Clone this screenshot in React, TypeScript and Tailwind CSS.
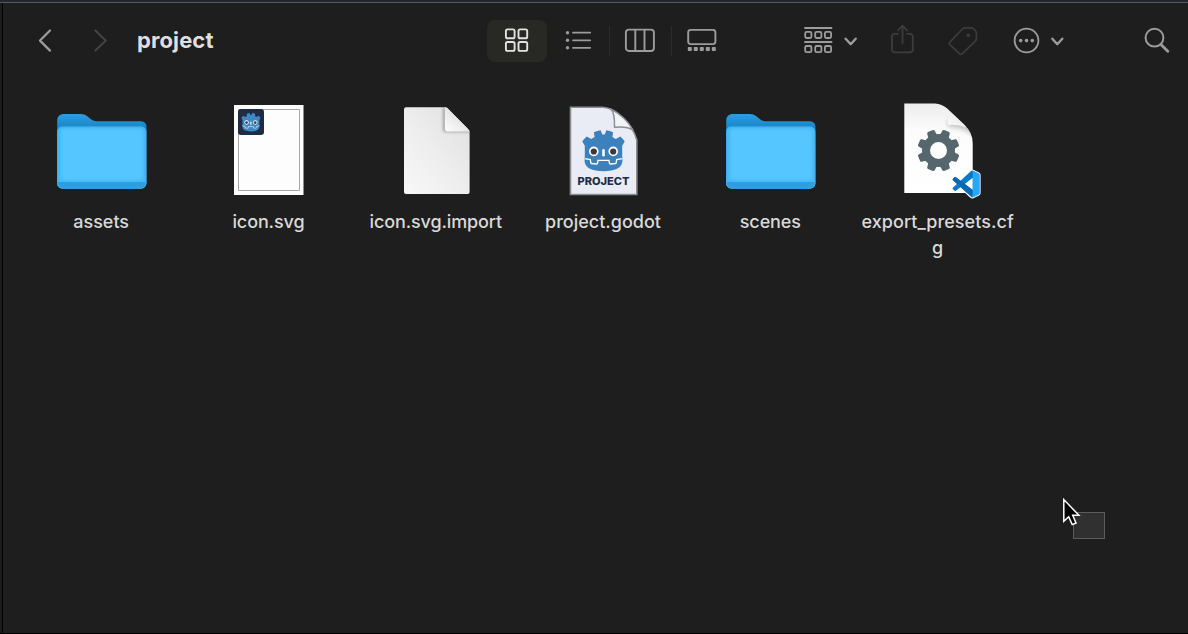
import type { ReactNode } from "react";

function ToolIcon({ box, className, children }: { box: string; className: string; children: ReactNode }) {
  return (
    <svg
      viewBox={box}
      className={`h-[42px] shrink-0 ${className}`}
      fill="none"
      stroke="currentColor"
      strokeWidth={2}
      strokeLinecap="round"
      strokeLinejoin="round"
    >
      {children}
    </svg>
  );
}

function Toolbar() {
  return (
    <header className="flex h-[75px] shrink-0 items-start pt-[17px] text-[#9c9c9c]">
      <ToolIcon box="0 0 20 42" className="ml-[32px] w-5">
        <path d="M15 10.5 5 20.6 15 30.6" strokeWidth={2.2} />
      </ToolIcon>
      <ToolIcon box="0 0 20 42" className="ml-[36px] w-5 text-[#464646]">
        <path d="M4.3 10.5 14.8 20.6 4.3 30.6" />
      </ToolIcon>
      <h1 className="ml-[26px] w-[350px] text-[22px] leading-[41px] font-bold tracking-[0.1px] text-[#dfdfdf]">
        project
      </h1>

      <div className="flex h-[42px] w-[60px] shrink-0 justify-center rounded-lg bg-[#282924] text-[#e2e2e2]">
        <ToolIcon box="0 0 60 42" className="w-[60px]">
          {[18.9, 31.5].map((x) =>
            [9.4, 22].map((y) => <rect key={`${x}-${y}`} x={x} y={y} width={8.7} height={8.9} rx={1.6} strokeWidth={1.9} />),
          )}
        </ToolIcon>
      </div>
      <ToolIcon box="0 0 30 42" className="ml-[17px] w-[30px]">
        {[12.7, 20.3, 27.8].map((y) => (
          <g key={y}>
            <circle cx={3.5} cy={y} r={1.7} fill="currentColor" stroke="none" />
            <path d={`M9 ${y}H26.2`} strokeWidth={1.8} />
          </g>
        ))}
      </ToolIcon>
      <div className="mt-[6px] ml-[15px] h-[30px] w-px shrink-0 bg-[#2b2b2b]" />
      <ToolIcon box="0 0 32 42" className="ml-[14px] w-8">
        <rect x={1.9} y={9.6} width={28} height={21.4} rx={3} strokeWidth={1.9} />
        <path d="M11.3 10v21M20.5 10v21" strokeWidth={1.9} />
      </ToolIcon>
      <div className="mt-[6px] ml-[15px] h-[30px] w-px shrink-0 bg-[#2b2b2b]" />
      <ToolIcon box="0 0 32 42" className="ml-[14px] w-8">
        <rect x={2.2} y={9.9} width={27.2} height={14.2} rx={2.5} strokeWidth={1.9} />
        {[1.8, 7.8, 13.8, 19.8, 25.8].map((x) => (
          <rect key={x} x={x} y={27} width={4} height={4} rx={0.7} fill="currentColor" stroke="none" />
        ))}
      </ToolIcon>

      <ToolIcon box="0 0 30 42" className="ml-[85px] w-[30px]">
        <path d="M2 8H28.5M2 22H28.5" strokeWidth={1.9} />
        {[2, 12, 21.7].map((x) =>
          [11.8, 26].map((y) => <rect key={`${x}-${y}`} x={x + 0.2} y={y} width={6.2} height={6.2} rx={1.4} strokeWidth={1.8} />),
        )}
      </ToolIcon>
      <ToolIcon box="0 0 16 42" className="ml-[10px] w-4">
        <path d="M2.6 18.7 7.7 24.2 12.7 18.7" strokeWidth={2.4} />
      </ToolIcon>
      <ToolIcon box="0 0 28 42" className="ml-[30px] w-7 text-[#3c3c3c]">
        <path d="M9 13.8H5.8a2.8 2.8 0 0 0-2.8 2.8V29.6a2.8 2.8 0 0 0 2.8 2.8H21a2.8 2.8 0 0 0 2.8-2.8V16.6A2.8 2.8 0 0 0 21 13.8H18M13.5 23V6M9 10.3 13.5 5.7 18 10.3" strokeWidth={1.8} />
      </ToolIcon>
      <ToolIcon box="0 0 32 42" className="ml-[30px] w-8 text-[#3c3c3c]">
        <path d="M3.1 21.8 15.3 9Q16.6 7.8 18.2 7.8H24Q26 7.8 27 9.1L28.6 11Q29.4 12 29.4 13.4V18.5Q29.4 20.2 28.2 21.3L15.5 33.4Q13.8 34.9 12.2 33.3L3.1 24.8Q1.6 23.3 3.1 21.8Z" strokeWidth={1.7} />
        <circle cx={21.3} cy={15.3} r={1.8} fill="currentColor" stroke="none" />
      </ToolIcon>
      <ToolIcon box="0 0 30 42" className="ml-[33px] w-[30px]">
        <circle cx={14.5} cy={20.5} r={11.9} strokeWidth={1.8} />
        {[8.7, 14.5, 20.3].map((x) => (
          <circle key={x} cx={x} cy={20.6} r={1.8} fill="currentColor" stroke="none" />
        ))}
      </ToolIcon>
      <ToolIcon box="0 0 16 42" className="ml-[8px] w-4">
        <path d="M2.3 18.7 7.3 24.2 12.3 18.7" strokeWidth={2.4} />
      </ToolIcon>
      <ToolIcon box="0 0 30 42" className="ml-[76px] w-[30px]">
        <circle cx={12.5} cy={17.7} r={8.9} strokeWidth={2} />
        <path d="m19.2 24.7 6.6 6.5" strokeWidth={2.8} />
      </ToolIcon>
    </header>
  );
}

function Art({ children }: { children: ReactNode }) {
  return (
    <svg viewBox="0 0 100 104" className="h-[104px] w-[100px]">
      {children}
    </svg>
  );
}

function FolderArt({ id }: { id: string }) {
  return (
    <Art>
      <defs>
        <linearGradient id={`${id}-back`} x1="0" y1="0" x2="0" y2="1">
          <stop offset="0" stopColor="#2f9ee0" />
          <stop offset="0.2" stopColor="#1583c6" />
          <stop offset="1" stopColor="#2497dc" />
        </linearGradient>
        <filter id={`${id}-soft`} x="-10%" y="-10%" width="120%" height="120%">
          <feGaussianBlur stdDeviation="1.6" />
        </filter>
        <clipPath id={`${id}-clip`}>
          <rect x="6.2" y="26.5" width="89" height="62" rx="5" />
        </clipPath>
      </defs>
      <path d="M6.200 20a6 6 0 0 1 6-6H30q3.500 0 6 2l4 3.200q2.500 2 5.500 2H90a5.500 5.500 0 0 1 5.500 5.500V83a5.500 5.500 0 0 1-5.500 5.500H11.700A5.500 5.500 0 0 1 6.200 83Z" fill={`url(#${id}-back)`} />
      <g clipPath={`url(#${id}-clip)`}>
        <rect x="6" y="26.5" width="90" height="62" fill="#46b8f5" />
        <rect x="10" y="29" width="82" height="51" rx="3" fill="#54c6ff" filter={`url(#${id}-soft)`} />
        <rect x="6" y="82" width="90" height="8" fill="#2d9fe0" />
      </g>
      <rect x="6.600" y="26.800" width="88.300" height="61.400" rx="5" fill="none" stroke="#3daeea" strokeWidth="0.8" />
    </Art>
  );
}

function GodotHead({ color }: { color: string }) {
  return (
    <g>
      <path
        d="M31.800 59V45.800L29.300 41.600Q31 38.800 33.800 36.600L38.200 39 41.600 37 40.900 32.200Q44 30.700 47.600 30.200L49.300 34.400H51.700L53.400 30.200Q57 30.700 60.100 32.200L59.400 37 62.800 39 67.200 36.600Q70 38.800 71.700 41.600L69.200 45.800V59Z"
        fill={color}
      />
      <path d="M31.600 57.500H69.400V61.500Q68.200 71.200 50.500 71.200 32.800 71.200 31.600 61.500Z" fill={color} />
      <path
        d="M31.600 58.700 37.300 59.500 37.900 63Q38.100 63.700 39 63.700L43.600 64Q44.500 64 44.600 63.100L45 60.300H56L56.400 63.100Q56.500 64 57.400 64L62 63.700Q62.900 63.700 63.100 63L63.700 59.500 69.400 58.700"
        fill="none"
        stroke="#fff"
        strokeWidth="1.300"
      />
      <path d="M50.500 50.200V55.200" stroke="#fff" strokeWidth="2.600" strokeLinecap="round" />
      {[40.800, 60.200].map((x) => (
        <g key={x}>
          <circle cx={x} cy="51.400" r="4.800" fill="#fff" />
          <circle cx={x} cy="51.500" r="3.100" fill="#383a3e" />
        </g>
      ))}
    </g>
  );
}

function SvgArt() {
  return (
    <Art>
      <path d="M16 5h69.500v90H16z" fill="#fdfdfd" />
      <path d="M20.500 9.500h61v81h-61z" fill="none" stroke="#a8a8a8" />
      <rect x="20" y="9" width="26" height="26" rx="3" fill="#202c44" />
      <g transform="translate(10.200 -.600) scale(.450)">
        <GodotHead color="#3f87c3" />
      </g>
    </Art>
  );
}

function PlainArt() {
  return (
    <Art>
      <defs>
        <linearGradient id="plain-page" x1="0" y1="1" x2="1" y2="0">
          <stop offset="0" stopColor="#f8f8f8" />
          <stop offset="0.45" stopColor="#eeeeef" />
          <stop offset="1" stopColor="#dedede" />
        </linearGradient>
        <linearGradient id="plain-fold" x1="0" y1="1" x2="0.7" y2="0.3">
          <stop offset="0" stopColor="#ffffff" />
          <stop offset="1" stopColor="#dcdcdc" />
        </linearGradient>
        <filter id="plain-shadow" x="-40%" y="-40%" width="180%" height="180%">
          <feGaussianBlur stdDeviation="1.8" />
        </filter>
        <clipPath id="plain-clip">
          <path d="M20 7.300H58.500q2 0 3.300 1.300L81.600 28.500q2 2 2 4V92a2 2 0 0 1-2 2H20a2 2 0 0 1-2-2V9.300a2 2 0 0 1 2-2Z" />
        </clipPath>
      </defs>
      <g clipPath="url(#plain-clip)">
        <path d="M18 7h68v88H18z" fill="url(#plain-page)" />
        <path d="M57 7v22q0 3 3 3h25V14Z" fill="#888" opacity="0.75" filter="url(#plain-shadow)" />
        <path d="M58.800 6v22.500q0 3 3 3H86V20Z" fill="url(#plain-fold)" />
      </g>
    </Art>
  );
}

function ProjectArt() {
  return (
    <Art>
      <path d="M17.500 7.200H49.500Q60.500 8 67.500 16Q80.500 27 83.800 40V94.500H17.500Z" fill="#e9ecf4" stroke="#8e8e8e" strokeWidth="1.600" />
      <path d="M57.500 8.800Q62 12 61.500 27.300Q74 26 80 30Q73 17 57.500 8.800Z" fill="#f3f4f8" stroke="#8e8e8e" strokeWidth="1.500" strokeLinejoin="round" />
      <GodotHead color="#3c81bb" />
      <text x="24.500" y="85.300" textLength="52" lengthAdjust="spacingAndGlyphs" fontFamily="Inter, sans-serif" fontWeight="800" fontSize="10.500" fill="#202b49">
        PROJECT
      </text>
    </Art>
  );
}

const vscodePath =
  "M23.15 2.587L18.21.21a1.494 1.494 0 0 0-1.705.29l-9.46 8.63-4.12-3.128a.999.999 0 0 0-1.276.057L.327 7.261A1 1 0 0 0 .326 8.74L3.899 12 .326 15.26a1 1 0 0 0 .001 1.479L1.65 17.94a.999.999 0 0 0 1.276.057l4.12-3.128 9.46 8.63a1.492 1.492 0 0 0 1.704.29l4.942-2.377A1.5 1.5 0 0 0 24 20.06V3.939a1.5 1.5 0 0 0-.85-1.352zm-5.146 14.861L10.826 12l7.178-5.448v10.896z";

function ConfigArt() {
  return (
    <Art>
      <defs>
        <linearGradient id="cfg-page" x1="0" y1="0" x2="0" y2="1">
          <stop offset="0" stopColor="#ececec" />
          <stop offset="0.3" stopColor="#fcfcfc" />
          <stop offset="1" stopColor="#ffffff" />
        </linearGradient>
        <linearGradient id="cfg-fold" x1="0" y1="1" x2="0.7" y2="0.3">
          <stop offset="0" stopColor="#ffffff" />
          <stop offset="1" stopColor="#e4e4e4" />
        </linearGradient>
        <filter id="cfg-shadow" x="-40%" y="-60%" width="180%" height="220%">
          <feGaussianBlur stdDeviation="2.4" />
        </filter>
        <clipPath id="cfg-clip">
          <path d="M16.300 3.500H47Q54 4 59 8.500L76 24.500Q84.700 32.500 84.700 43V93H16.300Z" />
        </clipPath>
      </defs>
      <g clipPath="url(#cfg-clip)">
        <path d="M16 3h70v91H16z" fill="url(#cfg-page)" />
        <path d="M60 20V27Q74 26 86 36V20Z" fill="#888" opacity="0.5" filter="url(#cfg-shadow)" />
        <path d="M54 3Q60.500 8 60.200 25Q70 24 78 27.500L84 20 64 3Z" fill="url(#cfg-fold)" />
      </g>
      <g fill="#56666d">
        {[22.5, 67.5, 112.5, 157.5, 202.5, 247.5, 292.5, 337.5].map((a) => (
          <path key={a} d="M45.6 37 46.5 30.7q.2-1.200 1.400-1.200h5.200q1.200 0 1.400 1.200L55.4 37Z" transform={`rotate(${a} 50.5 50.5)`} />
        ))}
        <circle cx="50.5" cy="50.5" r="12.500" fill="none" stroke="#56666d" strokeWidth="8" />
      </g>
      <g transform="translate(64.600 70.500) scale(1.120)">
        <path d={vscodePath} fill="#fff" stroke="#fff" strokeWidth="2" strokeLinejoin="round" />
        <path d={vscodePath} fill="#0878c8" />
        <path d="M.33 7.260 1.650 6.060Q2.300 5.500 2.930 6L17.500 17v6.500L.33 8.740Q-.4 8 .33 7.260Z" fill="#0868b4" />
        <path d="M18 .2 23.150 2.590Q24 3 24 3.940V20.060Q24 21 23.150 21.410L18.210 23.790Q17.500 24 16.800 23.700Q18 23.200 18 22.200V1.700Q18 .6 16.800.3Q17.500 0 18 .2Z" fill="#28a7f2" />
      </g>
    </Art>
  );
}

const files = [
  { lines: ["assets"], art: <FolderArt id="assets" />, spacing: "tracking-normal" },
  { lines: ["icon.svg"], art: <SvgArt />, spacing: "tracking-[-0.12px]" },
  { lines: ["icon.svg.import"], art: <PlainArt />, spacing: "tracking-[-0.12px]" },
  { lines: ["project.godot"], art: <ProjectArt />, spacing: "tracking-normal" },
  { lines: ["scenes"], art: <FolderArt id="scenes" />, spacing: "tracking-[-0.1px]" },
  { lines: ["export_presets.cf", "g"], art: <ConfigArt />, spacing: "tracking-[0.05px]" },
];

export default function App() {
  return (
    <div className="relative flex h-[634px] w-[1188px] flex-col overflow-hidden bg-[#1e1e1e] font-['Inter',sans-serif]">
      <div className="h-[2px] shrink-0 bg-[#23272d]" />
      <div className="h-px shrink-0 bg-[#5b5b5b]" />
      <div className="flex min-h-0 flex-1">
        <div className="w-[2px] shrink-0 bg-[#1b1b1b]" />
        <div className="w-px shrink-0 bg-black" />
        <div className="flex min-w-0 flex-1 flex-col">
          <Toolbar />
          <main className="ml-[14.5px] grid grid-cols-[repeat(6,167.3px)] pt-[22px]">
            {files.map((file) => (
              <figure key={file.lines[0]} className="flex flex-col items-center">
                {file.art}
                <figcaption className={`mt-[5px] text-center text-[18px] leading-[25.5px] font-medium text-[#d9d9d9] ${file.spacing}`}>
                  {file.lines.map((line) => (
                    <span key={line} className="block">{line}</span>
                  ))}
                </figcaption>
              </figure>
            ))}
          </main>
        </div>
      </div>
      <div className="h-px shrink-0 bg-black" />
      <div className="absolute top-[512px] left-[1073px] h-[27px] w-8 border border-[#5c5c5c] bg-[#303030]" />
      <svg viewBox="0 0 24 32" className="absolute top-[496px] left-[1060px] h-8 w-6">
        <path d="M3.8 3.5V25.2L8.7 20.8 12.2 28.6 16 27 12.7 19.3H18.9Z" fill="#000" stroke="#fff" strokeWidth="1.5" />
      </svg>
    </div>
  );
}
